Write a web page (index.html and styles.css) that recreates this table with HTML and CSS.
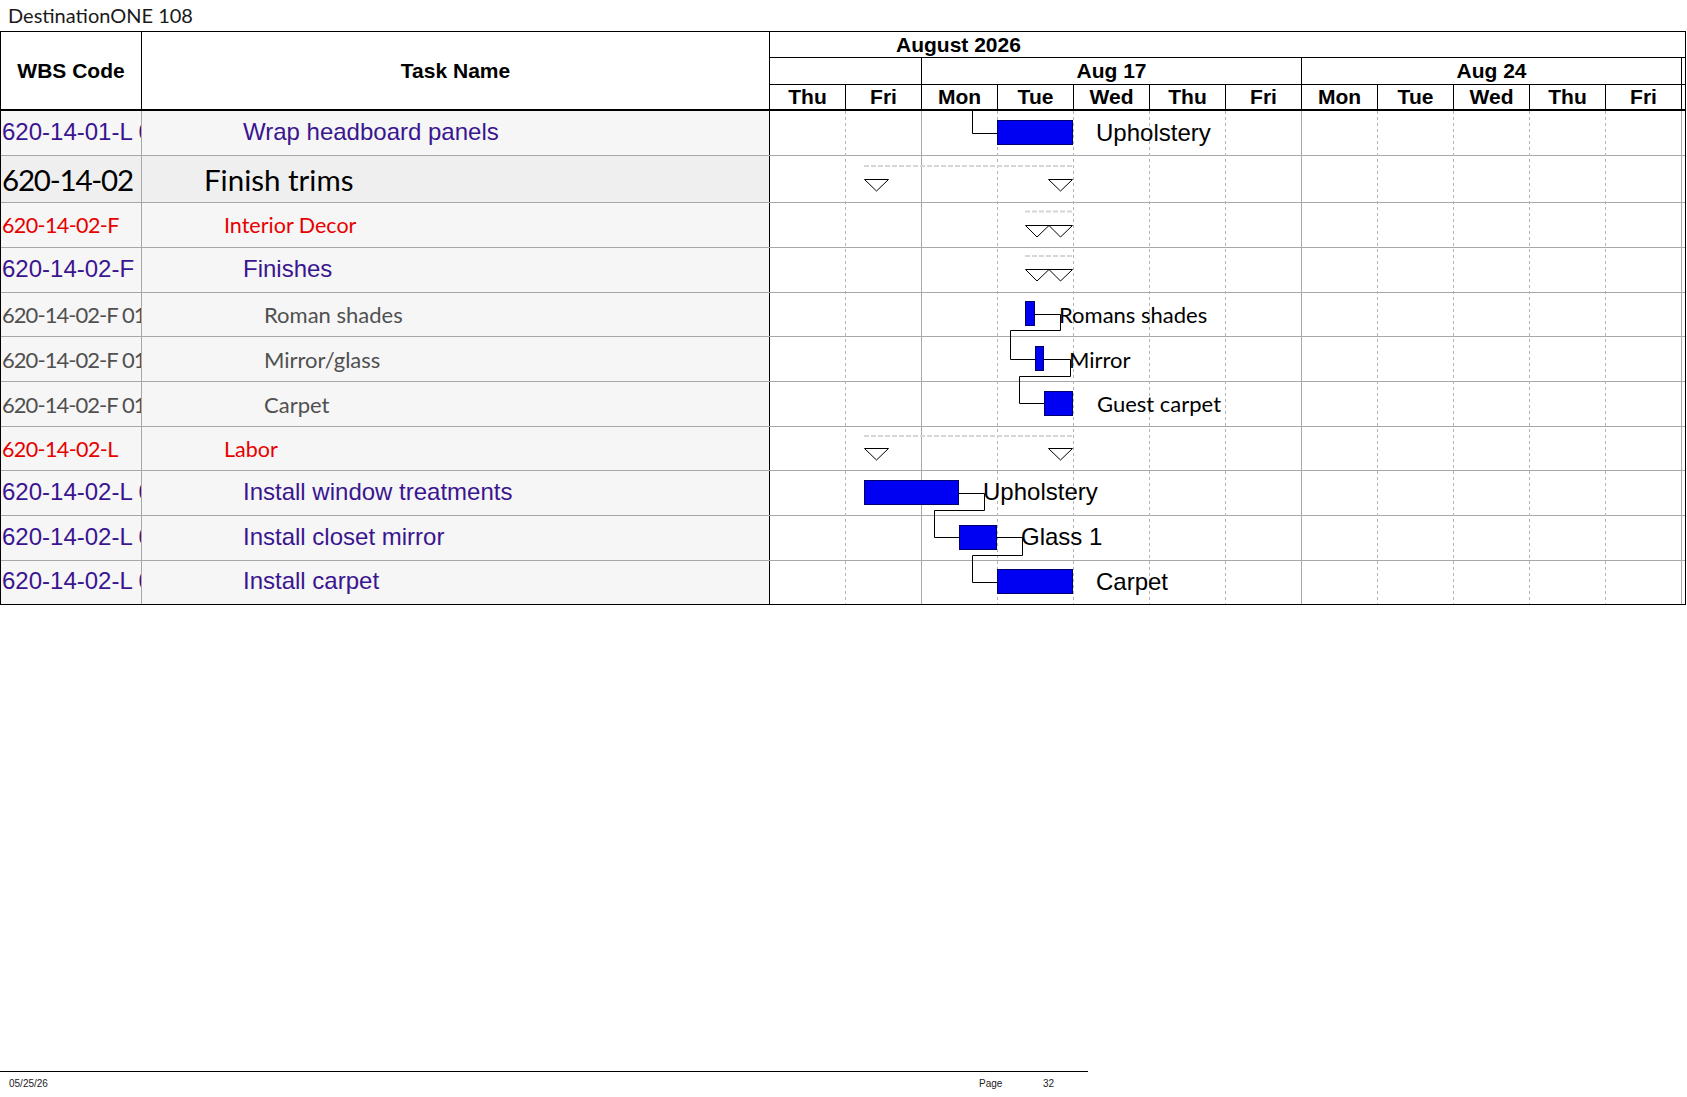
FILE: index.html
```html
<!DOCTYPE html>
<html lang="en">
<head>
<meta charset="utf-8">
<title>DestinationONE 108</title>
<link rel="stylesheet" href="styles.css">
</head>
<body>
<div class="title">DestinationONE 108</div>
<div class="sheet">
  <div class="left">
    <div class="lhead">
      <div class="hcell wbs-h">WBS Code</div>
      <div class="hcell task-h">Task Name</div>
    </div>
    <div class="row h45"><div class="cell wbs t-purple">620-14-01-L 01</div><div class="cell task ind-purple t-purple">Wrap headboard panels</div></div>
    <div class="row h47 dark"><div class="cell wbs t-big code-big">620-14-02</div><div class="cell task ind-sum t-big">Finish trims</div></div>
    <div class="row h45"><div class="cell wbs t-red code-tight">620-14-02-F</div><div class="cell task ind-red t-red">Interior Decor</div></div>
    <div class="row h45"><div class="cell wbs t-purple">620-14-02-F 01</div><div class="cell task ind-purple t-purple">Finishes</div></div>
    <div class="row h44"><div class="cell wbs t-gray code-gray">620-14-02-F 01.01</div><div class="cell task ind-gray t-gray">Roman shades</div></div>
    <div class="row h45"><div class="cell wbs t-gray code-gray">620-14-02-F 01.02</div><div class="cell task ind-gray t-gray">Mirror/glass</div></div>
    <div class="row h45"><div class="cell wbs t-gray code-gray">620-14-02-F 01.03</div><div class="cell task ind-gray t-gray">Carpet</div></div>
    <div class="row h44"><div class="cell wbs t-red code-tight">620-14-02-L</div><div class="cell task ind-red t-red">Labor</div></div>
    <div class="row h45"><div class="cell wbs t-purple">620-14-02-L 01</div><div class="cell task ind-purple t-purple">Install window treatments</div></div>
    <div class="row h45"><div class="cell wbs t-purple">620-14-02-L 02</div><div class="cell task ind-purple t-purple">Install closet mirror</div></div>
    <div class="row h43 last"><div class="cell wbs t-purple">620-14-02-L 03</div><div class="cell task ind-purple t-purple">Install carpet</div></div>
  </div>
  <div class="chart">
    <div class="month"><span class="month-label">August 2026</span></div>
    <div class="weeks">
      <div class="wk wk-part"></div>
      <div class="wk">Aug 17</div>
      <div class="wk">Aug 24</div>
      <div class="sliver"></div>
    </div>
    <div class="days">
      <div class="day">Thu</div><div class="day">Fri</div>
      <div class="day">Mon</div><div class="day">Tue</div><div class="day">Wed</div><div class="day">Thu</div><div class="day">Fri</div>
      <div class="day">Mon</div><div class="day">Tue</div><div class="day">Wed</div><div class="day">Thu</div><div class="day">Fri</div>
      <div class="sliver"></div>
    </div>
    <svg class="gantt" width="915" height="493" viewBox="0 0 915 493" xmlns="http://www.w3.org/2000/svg">
      <g class="hlines">
        <line x1="0" y1="44.5" x2="915" y2="44.5"/>
        <line x1="0" y1="91.5" x2="915" y2="91.5"/>
        <line x1="0" y1="136.5" x2="915" y2="136.5"/>
        <line x1="0" y1="181.5" x2="915" y2="181.5"/>
        <line x1="0" y1="225.5" x2="915" y2="225.5"/>
        <line x1="0" y1="270.5" x2="915" y2="270.5"/>
        <line x1="0" y1="315.5" x2="915" y2="315.5"/>
        <line x1="0" y1="359.5" x2="915" y2="359.5"/>
        <line x1="0" y1="404.5" x2="915" y2="404.5"/>
        <line x1="0" y1="449.5" x2="915" y2="449.5"/>
      </g>
      <g class="vdash">
        <line x1="75.5" y1="0" x2="75.5" y2="493"/>
        <line x1="227.5" y1="0" x2="227.5" y2="493"/>
        <line x1="303.5" y1="0" x2="303.5" y2="493"/>
        <line x1="379.5" y1="0" x2="379.5" y2="493"/>
        <line x1="455.5" y1="0" x2="455.5" y2="493"/>
        <line x1="607.5" y1="0" x2="607.5" y2="493"/>
        <line x1="683.5" y1="0" x2="683.5" y2="493"/>
        <line x1="759.5" y1="0" x2="759.5" y2="493"/>
        <line x1="835.5" y1="0" x2="835.5" y2="493"/>
      </g>
      <g class="vsolid">
        <line x1="151.5" y1="0" x2="151.5" y2="493"/>
        <line x1="531.5" y1="0" x2="531.5" y2="493"/>
        <line x1="911.5" y1="0" x2="911.5" y2="493"/>
      </g>
      <g class="sumline">
        <line x1="94" y1="55" x2="303" y2="55"/>
        <line x1="255" y1="100.5" x2="303" y2="100.5"/>
        <line x1="255" y1="145" x2="303" y2="145"/>
        <line x1="94" y1="325" x2="303" y2="325"/>
      </g>
      <g class="ms">
        <polygon points="94.5,68.5 118.5,68.5 106.5,80"/>
        <polygon points="278.5,68.5 302.5,68.5 290.5,80"/>
        <polygon points="255.5,114.5 279,114.5 267,126"/>
        <polygon points="279,114.5 302.5,114.5 290.5,126"/>
        <polygon points="255.5,158.5 279,158.5 267,170"/>
        <polygon points="279,158.5 302.5,158.5 290.5,170"/>
        <polygon points="94.5,337.5 118.5,337.5 106.5,349"/>
        <polygon points="278.5,337.5 302.5,337.5 290.5,349"/>
      </g>
      <g class="links">
        <path d="M202.5 0 V22.5 H227.5"/>
        <path d="M265 203.5 H290.5 V219.5 H240.5 V248.5 H265.5"/>
        <path d="M274 248.5 H300.5 V265.5 H249.5 V292.5 H274.5"/>
        <path d="M188.5 382.5 H214.5 V399.5 H164.5 V426.5 H189.5"/>
        <path d="M226.5 426.5 H252.5 V444.5 H202.5 V471.5 H227.5"/>
      </g>
      <g class="bars">
        <rect x="227.5" y="9.5" width="75" height="24"/>
        <rect x="255.5" y="190.5" width="9" height="24"/>
        <rect x="265.5" y="235.5" width="8" height="24"/>
        <rect x="274.5" y="280.5" width="28" height="24"/>
        <rect x="94.5" y="369.5" width="94" height="24"/>
        <rect x="189.5" y="414.5" width="37" height="24"/>
        <rect x="227.5" y="458.5" width="75" height="24"/>
      </g>
      <g class="labels">
        <text class="lab-a" x="326" y="30">Upholstery</text>
        <text class="lab-c" x="289" y="212">Romans shades</text>
        <text class="lab-c" x="299" y="257">Mirror</text>
        <text class="lab-c" x="327" y="301">Guest carpet</text>
        <text class="lab-a" x="213" y="389">Upholstery</text>
        <text class="lab-a" x="251" y="433.5">Glass 1</text>
        <text class="lab-a" x="326" y="478.5">Carpet</text>
      </g>
    </svg>
  </div>
</div>
<div class="footer">
  <div class="f-date">05/25/26</div>
  <div class="f-page">Page</div>
  <div class="f-num">32</div>
</div>
</body>
</html>
```
FILE: styles.css
```css
* { box-sizing: border-box; }

body {
  margin: 0;
  background: #ffffff;
  color: #000000;
  font-family: "Liberation Sans", Arial, sans-serif;
  width: 1687px;
}

.title {
  height: 31px;
  padding-left: 8px;
  font-family: Lato, "Open Sans", sans-serif;
  font-weight: 400;
  font-size: 20px;
  line-height: 31px;
  color: #1a1a1a;
}

.sheet {
  display: flex;
  width: 1686px;
  border: 1px solid #000;
}

/* ---------- left table ---------- */
.left {
  width: 769px;
  display: flex;
  flex-direction: column;
}

.lhead {
  display: flex;
  height: 79px;
  border-bottom: 2px solid #000;
  background: #fff;
}

.hcell {
  display: flex;
  align-items: center;
  justify-content: center;
  font-weight: bold;
  font-size: 21px;
}

.wbs-h {
  width: 141px;
  border-right: 1px solid #000;
}

.task-h {
  width: 628px;
  border-right: 1px solid #000;
}

.row {
  display: flex;
  background: #f6f6f6;
  border-bottom: 1px solid #a8a8a8;
}
.row.dark { background: #efefef; }
.row.last { border-bottom: none; }

.h43 { height: 43px; }
.h44 { height: 44px; }
.h45 { height: 45px; }
.h47 { height: 47px; }

.cell {
  display: flex;
  align-items: center;
  overflow: hidden;
  white-space: nowrap;
}

.wbs {
  width: 141px;
  padding-left: 1px;
  border-right: 1px solid #a8a8a8;
}

.task {
  width: 628px;
  border-right: 1px solid #000;
}

.ind-sum { padding-left: 62px; }
.ind-red { padding-left: 82px; }
.ind-purple { padding-left: 101px; }
.ind-gray { padding-left: 122px; }

.t-purple {
  font-family: "Liberation Sans", Arial, sans-serif;
  font-size: 24px;
  color: #3a1590;
  padding-bottom: 3px;
}

.t-red {
  font-family: Lato, sans-serif;
  font-size: 21.5px;
  color: #e60000;
}

.t-gray {
  font-family: Lato, sans-serif;
  font-size: 22px;
  color: #505050;
}

.t-big {
  font-family: Lato, sans-serif;
  font-size: 29.5px;
  color: #000;
}

.code-big { letter-spacing: -1.2px; }
.code-tight { letter-spacing: -0.6px; }
.code-gray { letter-spacing: -0.95px; }

/* ---------- chart ---------- */
.chart {
  width: 915px;
  display: flex;
  flex-direction: column;
}

.month {
  height: 26px;
  border-bottom: 1px solid #000;
  display: flex;
  align-items: center;
  padding-left: 126px;
  font-weight: bold;
  font-size: 21px;
}

.weeks {
  display: flex;
  height: 27px;
  border-bottom: 1px solid #000;
}

.wk {
  width: 380px;
  border-right: 1px solid #000;
  display: flex;
  align-items: center;
  justify-content: center;
  font-weight: bold;
  font-size: 21px;
}

.wk-part { width: 152px; }

.sliver { flex: 1; }

.days {
  display: flex;
  height: 26px;
  border-bottom: 2px solid #000;
}

.day {
  width: 76px;
  border-right: 1px solid #000;
  display: flex;
  align-items: center;
  justify-content: center;
  font-weight: bold;
  font-size: 21px;
}

.gantt {
  display: block;
  background: #fff;
}

.hlines line { stroke: #a8a8a8; stroke-width: 1; }
.vdash line { stroke: #b4b4b4; stroke-width: 1; stroke-dasharray: 3 3; }
.vsolid line { stroke: #a8a8a8; stroke-width: 1; }
.sumline line { stroke: #d6d6d6; stroke-width: 2; stroke-dasharray: 5 2; }
.ms polygon { fill: #fff; stroke: #000; stroke-width: 1; }
.links path { fill: none; stroke: #000; stroke-width: 1; }
.bars rect { fill: #0000f2; stroke: #00006a; stroke-width: 1; }

.lab-a {
  font-family: "Liberation Sans", Arial, sans-serif;
  font-size: 24px;
  fill: #000;
}

.lab-c {
  font-family: Lato, sans-serif;
  font-size: 22px;
  fill: #000;
}

/* ---------- footer ---------- */
.footer {
  width: 1088px;
  margin-top: 466px;
  border-top: 1px solid #000;
  display: grid;
  grid-template-columns: 979px 64px 1fr;
  padding-top: 6px;
  font-family: "Liberation Sans", Arial, sans-serif;
  font-size: 10px;
  line-height: 12px;
  color: #222;
}

.f-date { padding-left: 9px; }
```
